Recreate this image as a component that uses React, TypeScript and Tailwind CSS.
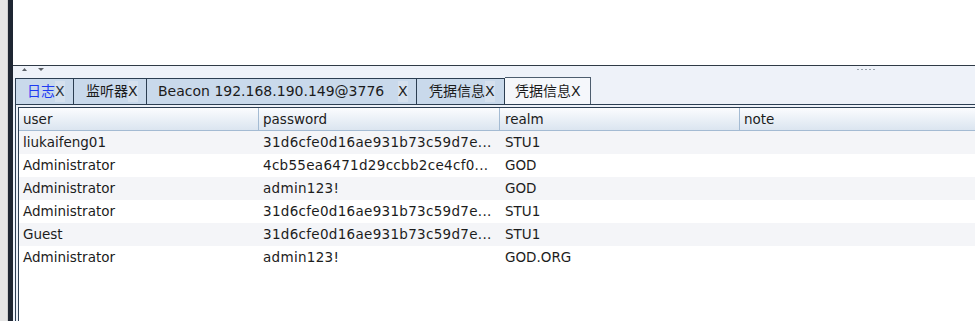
import React from "react";

const ROWS = [
  { user: "liukaifeng01", password: "31d6cfe0d16ae931b73c59d7e...", realm: "STU1", note: "" },
  { user: "Administrator", password: "4cb55ea6471d29ccbb2ce4cf0...", realm: "GOD", note: "" },
  { user: "Administrator", password: "admin123!", realm: "GOD", note: "" },
  { user: "Administrator", password: "31d6cfe0d16ae931b73c59d7e...", realm: "STU1", note: "" },
  { user: "Guest", password: "31d6cfe0d16ae931b73c59d7e...", realm: "STU1", note: "" },
  { user: "Administrator", password: "admin123!", realm: "GOD.ORG", note: "" },
];

const FONT = "font-['DejaVu_Sans','Noto_Sans_CJK_SC',sans-serif]";

export default function App() {
  return (
    <div className={`w-[975px] h-[321px] flex overflow-hidden bg-white ${FONT}`}>
      {/* left window edge */}
      <div className="w-[8px] bg-[#e5e5e5] border-r border-[#cfcfcf]" />
      <div className="w-[5px] bg-[#1e2632]" />

      <div className="flex-1 min-w-0 flex flex-col">
        {/* upper pane */}
        <div className="h-[65px] bg-white shrink-0" />
        <div className="h-px bg-[#2f3a46] shrink-0" />

        {/* lower pane */}
        <div className="flex-1 min-h-0 bg-[#eef2f9] flex flex-col">
          {/* split bar with arrows + grip */}
          <div className="h-[11px] shrink-0 flex items-start pt-[2px]">
            <div className="flex gap-[11px] pl-[9px]">
              <svg width="5" height="3" viewBox="0 0 5 3"><path d="M2.5 0 L5 3 L0 3 Z" fill="#5a5f66" /></svg>
              <svg width="6" height="3" viewBox="0 0 6 3"><path d="M0 0 L6 0 L3 3 Z" fill="#5a5f66" /></svg>
            </div>
            <div className="flex gap-[2px] ml-[813px] mt-[1px]">
              {[0, 1, 2, 3, 4].map((i) => (
                <span key={i} className="w-[2px] h-[1px] bg-[#9aa3ad]" />
              ))}
            </div>
          </div>

          {/* tab strip */}
          <div className="h-[27px] shrink-0 flex items-end pl-[2px] text-[14px] text-[#1b1b1b]">
            <div className="w-[59px] h-[26px] bg-[#c9d9eb] border border-b-0 border-[#2c3e52] flex items-center pl-[11px]">
              <span className="text-[#1f3bf2]">日志</span>
              <span className="text-[#2b3440] bg-[#d6e1ee]">X</span>
            </div>
            <div className="w-[73px] h-[26px] bg-[#c9d9eb] border-t border-r border-[#2c3e52] flex items-center pl-[12px]">
              <span>监听器</span>
              <span className="bg-[#d6e1ee]">X</span>
            </div>
            <div className="w-[270px] h-[26px] bg-[#c9d9eb] border-t border-r border-[#2c3e52] flex items-center pl-[11px]">
              <span className="w-[240px]">Beacon 192.168.190.149@3776</span>
              <span className="bg-[#d6e1ee]">X</span>
            </div>
            <div className="w-[88px] h-[26px] bg-[#c9d9eb] border-t border-r border-[#2c3e52] flex items-center pl-[12px]">
              <span>凭据信息</span>
              <span className="bg-[#d6e1ee]">X</span>
            </div>
            <div className="w-[86px] h-[27px] bg-[#f5f7fb] border-t border-r border-[#4d5d6e] flex items-center pl-[10px]">
              <span>凭据信息</span>
              <span>X</span>
            </div>
          </div>

          {/* tab content */}
          <div className="flex-1 min-h-0 ml-[2px] border-t border-l border-[#2c3e52] pt-[2px] pl-[2px] flex flex-col">
            <div className="flex-1 min-h-0 bg-white border-t border-l border-[#2c3e52] flex flex-col text-[13.5px] text-[#1c1c1c]">
              {/* header */}
              <div className="h-[23px] shrink-0 flex bg-gradient-to-b from-[#fbfcfe] to-[#dbe5f0] border-b border-[#a4bbd3]">
                <div className="w-[240px] border-r border-[#a4bbd3] flex items-center pl-[4px]">user</div>
                <div className="w-[241px] border-r border-[#a4bbd3] flex items-center pl-[4px]">password</div>
                <div className="w-[240px] border-r border-[#a4bbd3] flex items-center pl-[5px]">realm</div>
                <div className="flex-1 flex items-center pl-[4px]">note</div>
              </div>
              {/* rows */}
              {ROWS.map((r, i) => (
                <div
                  key={i}
                  className={`h-[23px] shrink-0 flex ${i % 2 === 0 ? "bg-[#f4f5f8]" : "bg-white"}`}
                >
                  <div className="w-[240px] flex items-center pl-[4px]">{r.user}</div>
                  <div className="w-[241px] flex items-center pl-[4px] tracking-[0.3px]">{r.password}</div>
                  <div className="w-[240px] flex items-center pl-[5px]">{r.realm}</div>
                  <div className="flex-1 flex items-center pl-[4px]">{r.note}</div>
                </div>
              ))}
            </div>
          </div>
        </div>
      </div>
    </div>
  );
}
